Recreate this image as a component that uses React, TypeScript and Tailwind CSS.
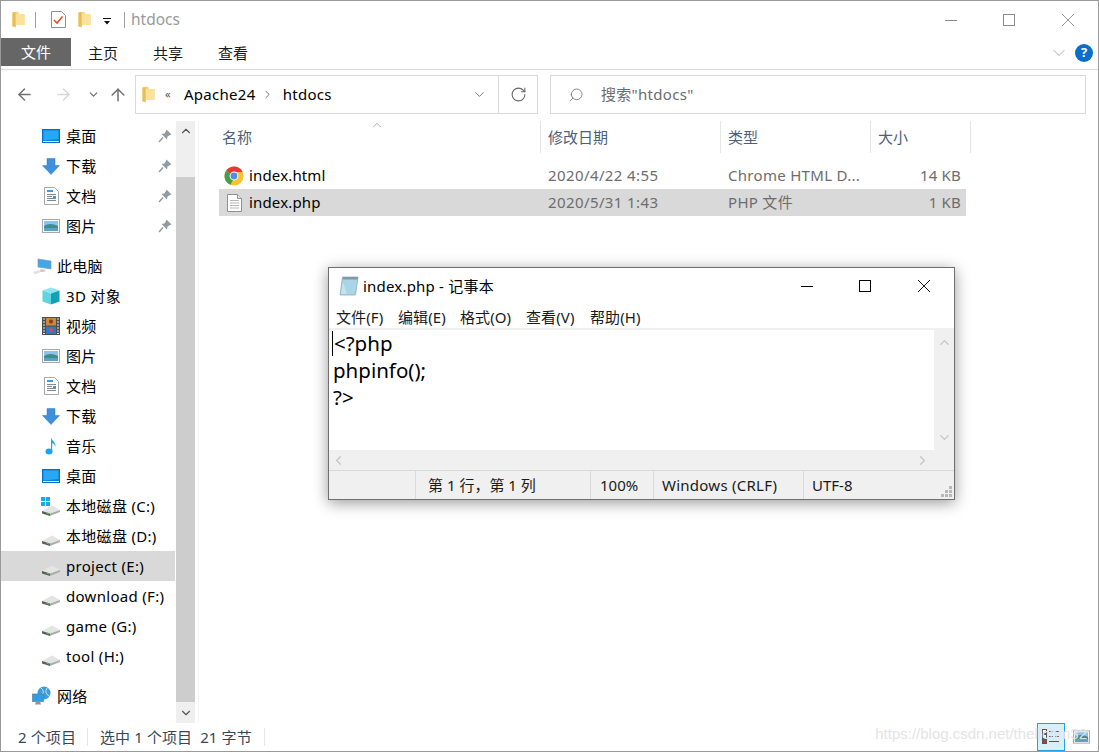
import { ChevronDown, ChevronUp, ChevronLeft, ChevronRight, ArrowLeft, ArrowRight, ArrowUp, RotateCw, Search } from 'lucide-react';
import type { ReactNode } from 'react';

function Folder({ className = '' }: { className?: string }) {
  return (
    <svg viewBox="0 0 13 17" className={`w-[13px] h-[17px] ${className}`}>
      <path d="M0.5 1.5 L6 0.5 L7 3 L12.5 3 L12.5 14 L4 14 L4 16.5 L0.5 15.5 Z" fill="#f6d67c" />
      <path d="M0.5 1.5 L3.5 1 L3.5 15.5 L0.5 15.5 Z" fill="#e8bd55" />
      <path d="M4 3 H12.5 V14 H4 Z" fill="#fbe29a" />
    </svg>
  );
}

function Desktop() {
  return (
    <svg viewBox="0 0 18 14" className="w-[18px] h-[14px]">
      <rect x="0.5" y="0.5" width="17" height="13" fill="#0f7fd6" stroke="#0a6fc2" />
      <path d="M1.5 1.5 H16.5 V10 L1.5 11.5 Z" fill="#28a8f4" />
      <rect x="1" y="12" width="16" height="1" fill="#d5ecfb" />
    </svg>
  );
}

function Download() {
  return (
    <svg viewBox="0 0 18 17" className="w-[18px] h-[17px]">
      <path d="M5 0.5 H13 V7.5 H17.5 L9 16.5 L0.5 7.5 H5 Z" fill="#3f8fdc" stroke="#2f7fcc" strokeWidth="0.5" />
    </svg>
  );
}

function Doc() {
  return (
    <svg viewBox="0 0 15 18" className="w-[15px] h-[18px]">
      <path d="M0.5 0.5 H10.5 L14.5 4.5 V17.5 H0.5 Z" fill="#fff" stroke="#a8a8a8" />
      <rect x="3" y="3" width="6" height="2" fill="#3b9be8" />
      <rect x="3" y="7" width="9" height="1" fill="#7c8a96" />
      <rect x="3" y="9" width="5" height="1" fill="#7c8a96" />
      <rect x="9" y="9" width="3" height="2" fill="#3b9be8" />
      <rect x="3" y="11" width="9" height="1" fill="#7c8a96" />
      <rect x="3" y="13" width="9" height="1" fill="#7c8a96" />
    </svg>
  );
}

function Picture({ className = 'w-[18px] h-[14px]' }: { className?: string }) {
  return (
    <svg viewBox="0 0 18 14" className={className}>
      <rect x="0.5" y="0.5" width="17" height="13" fill="#fff" stroke="#a8a8a8" />
      <rect x="2" y="2" width="14" height="5" fill="#8cc4ea" />
      <path d="M2 7 Q8 3 16 7 V12 H2 Z" fill="#3f8c8a" />
      <rect x="2" y="9" width="14" height="3" fill="#5aa2c8" />
    </svg>
  );
}

function Computer() {
  return (
    <svg viewBox="0 0 20 17" className="w-[20px] h-[17px]">
      <path d="M6 1 L19 3 V11 L6 9 Z" fill="#3fa9e8" stroke="#8a9aa8" strokeWidth="0.7" />
      <path d="M9 11 L14 12 L12 14 H7 Z" fill="#c8ccd0" />
      <path d="M1 14 L7 12 L9 14 L3 16.5 Z" fill="#dfe2e5" />
    </svg>
  );
}

function Cube() {
  return (
    <svg viewBox="0 0 18 18" className="w-[18px] h-[18px]">
      <path d="M9 0.5 L17.5 3.5 L9 6.5 L0.5 3.5 Z" fill="#8fe6ee" />
      <path d="M0.5 3.5 L9 6.5 V17.5 L0.5 14.5 Z" fill="#5fd3e0" />
      <path d="M17.5 3.5 L9 6.5 V17.5 L17.5 14.5 Z" fill="#12a0b4" />
    </svg>
  );
}

function Film() {
  return (
    <svg viewBox="0 0 18 18" className="w-[18px] h-[18px]">
      <rect width="18" height="18" fill="#4d4d4d" />
      <path d="M1 2 H3 M1 5 H3 M1 8 H3 M1 11 H3 M1 14 H3 M1 16.5 H3 M15 2 H17 M15 5 H17 M15 8 H17 M15 11 H17 M15 14 H17 M15 16.5 H17" stroke="#e8e8e8" strokeWidth="1.2" />
      <rect x="4" y="1" width="10" height="7.5" fill="#d0873a" />
      <rect x="4" y="9.5" width="10" height="7.5" fill="#2f78c8" />
      <circle cx="9" cy="4.5" r="2" fill="#7d3d2a" />
      <circle cx="9" cy="13" r="2" fill="#d8503a" />
    </svg>
  );
}

function Music() {
  return (
    <svg viewBox="0 0 12 18" className="w-[12px] h-[18px]">
      <ellipse cx="4" cy="14.5" rx="3.5" ry="3" fill="#18a5ee" />
      <path d="M6 14 V0.5 C7 4 11 5 10.5 10 C10 7.5 8.5 6.5 7.2 6 V14 Z" fill="#18a5ee" />
    </svg>
  );
}

function Drive({ win = false }: { win?: boolean }) {
  return (
    <span className="relative block w-[18px] h-[18px]">
      <svg viewBox="0 0 18 11" className="absolute left-0 top-[8px] w-[18px] h-[11px]">
        <path d="M0 6 L10 0.5 L18 5 L8 8.5 Z" fill="#e4e4e4" />
        <path d="M0 6 L8 8.5 V11 L0 8.5 Z" fill="#5c5c5c" />
        <path d="M8 8.5 L18 5 V7 L8 11 Z" fill="#adadad" />
        <path d="M4.5 7.6 L7.2 8.4 V9.6 L4.5 8.8 Z" fill="#3fd04a" />
      </svg>
      {win && (
        <svg viewBox="0 0 9 9" className="absolute left-[-1px] top-0 w-[9px] h-[9px]">
          <path d="M0 0 H4 V4 H0 Z M5 0 H9 V4 H5 Z M0 5 H4 V9 H0 Z M5 5 H9 V9 H5 Z" fill="#12aee8" />
        </svg>
      )}
    </span>
  );
}

function Network() {
  return (
    <svg viewBox="0 0 20 20" className="w-[20px] h-[20px]">
      <circle cx="12" cy="7" r="6.5" fill="#3f9bdc" />
      <path d="M9 2 Q13 5 10 9 M15 2 Q12 7 17 10" stroke="#bfe3f7" fill="none" />
      <rect x="0.5" y="8" width="11" height="7.5" fill="#2b9fe8" stroke="#5a7f9a" strokeWidth="0.7" />
      <path d="M4 15.5 H8 L9 18.5 H3 Z" fill="#8a96a0" />
    </svg>
  );
}

function Pin() {
  return (
    <svg viewBox="0 0 14 14" className="w-[14px] h-[14px]">
      <path d="M8.5 0.5 L13.5 5.5 L12 6 L9.5 7.5 L9 10.5 L3.5 5 L6.5 4.5 L8 2 Z" fill="#8f9aa3" />
      <path d="M5 8.5 L1 13" stroke="#8f9aa3" strokeWidth="1.4" />
    </svg>
  );
}

function Chrome() {
  return (
    <svg viewBox="0 0 20 20" className="w-[20px] h-[20px]">
      <circle cx="10" cy="10" r="9.5" fill="#fbc02d" />
      <path d="M10 0.5 A9.5 9.5 0 0 1 18.6 6 H10 A4.2 4.2 0 0 0 6.2 8.2 L2.6 4 A9.5 9.5 0 0 1 10 0.5 Z" fill="#e53935" />
      <path d="M2.6 4 L6.2 8.2 A4.2 4.2 0 0 0 9 14 L6.5 18.8 A9.5 9.5 0 0 1 2.6 4 Z" fill="#43a047" />
      <circle cx="10" cy="10" r="4.4" fill="#fff" />
      <circle cx="10" cy="10" r="3.4" fill="#4a8fe8" />
    </svg>
  );
}

function TextFile() {
  return (
    <svg viewBox="0 0 15 18" className="w-[15px] h-[18px]">
      <path d="M0.5 0.5 H10.5 L14.5 4.5 V17.5 H0.5 Z" fill="#fff" stroke="#8f8f8f" />
      <path d="M10.5 0.5 V4.5 H14.5" fill="#e8e8e8" stroke="#8f8f8f" />
      <path d="M3 6.5 H12 M3 9 H12 M3 11.5 H12 M3 14 H12" stroke="#b8b8b8" />
    </svg>
  );
}

function NotepadIcon() {
  return (
    <svg viewBox="0 0 20 20" className="w-[20px] h-[20px]">
      <path d="M3.5 1 H19 L16.5 19 H1 Z" fill="#a9d5e6" stroke="#7fa6b6" strokeWidth="0.7" />
      <path d="M4 1 H19 L18.6 3.5 H3.6 Z" fill="#8298a4" />
      <path d="M4 6 L2 18 H8 Z" fill="#c7e4ee" />
    </svg>
  );
}

// min / max / close, drawn crisp like the Windows caption glyphs
function WinControls({ color, className = '' }: { color: string; className?: string }) {
  return (
    <div className={`flex items-center ${className}`}>
      <svg viewBox="0 0 12 12" className="w-[12px] h-[12px]">
        <path d="M0 6.5 H12" stroke={color} />
      </svg>
      <svg viewBox="0 0 12 12" className="w-[12px] h-[12px] ml-[46px]">
        <rect x="0.5" y="0.5" width="11" height="11" fill="none" stroke={color} />
      </svg>
      <svg viewBox="0 0 12 12" className="w-[12px] h-[12px] ml-[47px]">
        <path d="M0 0 L12 12 M12 0 L0 12" stroke={color} strokeWidth="0.9" />
      </svg>
    </div>
  );
}

function NavRow({ icon, label, pin, indent = true, active }: { icon: ReactNode; label: string; pin?: boolean; indent?: boolean; active?: boolean }) {
  return (
    <div className={`h-[30px] flex items-center text-[15px] tracking-[0.3px] text-black ${active ? 'bg-[#d9d9d9] mr-px' : ''} ${indent ? 'pl-[40px]' : 'pl-[30px]'}`}>
      <span className={`flex justify-center items-center ${indent ? 'w-[20px] mr-[5px]' : 'w-[22px] mr-[4px]'}`}>{icon}</span>
      <span className="flex-1 whitespace-nowrap pt-px">{label}</span>
      {pin && <span className="mr-[4px]"><Pin /></span>}
    </div>
  );
}

function Sidebar() {
  return (
    <div className="w-[175px] shrink-0">
      <NavRow icon={<Desktop />} label="桌面" pin />
      <NavRow icon={<Download />} label="下载" pin />
      <NavRow icon={<Doc />} label="文档" pin />
      <NavRow icon={<Picture />} label="图片" pin />
      <div className="h-[10px]" />
      <NavRow icon={<Computer />} label="此电脑" indent={false} />
      <NavRow icon={<Cube />} label="3D 对象" />
      <NavRow icon={<Film />} label="视频" />
      <NavRow icon={<Picture />} label="图片" />
      <NavRow icon={<Doc />} label="文档" />
      <NavRow icon={<Download />} label="下载" />
      <NavRow icon={<Music />} label="音乐" />
      <NavRow icon={<Desktop />} label="桌面" />
      <NavRow icon={<Drive win />} label="本地磁盘 (C:)" />
      <NavRow icon={<Drive />} label="本地磁盘 (D:)" />
      <NavRow icon={<Drive />} label="project (E:)" active />
      <NavRow icon={<Drive />} label="download (F:)" />
      <NavRow icon={<Drive />} label="game (G:)" />
      <NavRow icon={<Drive />} label="tool (H:)" />
      <div className="h-[10px]" />
      <NavRow icon={<Network />} label="网络" indent={false} />
    </div>
  );
}

function FileRow({ icon, name, date, type, size, selected }: { icon: ReactNode; name: string; date: string; type: string; size: string; selected?: boolean }) {
  return (
    <div className={`grid grid-cols-[329px_180px_150px_83px] items-center w-[747px] h-[27px] text-[15px] text-[#6d6d6d] ${selected ? 'bg-[#d9d9d9]' : ''}`}>
      <div className="flex items-center pl-[5px] text-black">
        <span className="w-[20px] flex justify-center mr-[5px]">{icon}</span>
        <span className="tracking-[0.15px]">{name}</span>
      </div>
      <div className="tracking-[0.4px]">{date}</div>
      <div className="whitespace-nowrap tracking-[0.3px]">{type}</div>
      <div className="text-right tracking-[0.2px]">{size}</div>
    </div>
  );
}

function Notepad() {
  return (
    <div className="absolute left-[327px] top-[266px] w-[627px] h-[233px] bg-white border border-[#6f6f6f] shadow-[0_3px_14px_rgba(0,0,0,0.4)] flex flex-col text-black">
      <div className="h-[36px] flex items-center pl-[10px] shrink-0">
        <NotepadIcon />
        <span className="ml-[4px] text-[15px] tracking-[0.2px] flex-1">index.php - 记事本</span>
        <WinControls color="#000" className="mr-[24px]" />
      </div>
      <div className="h-[24px] flex items-center pl-[7px] pt-[2px] text-[15px] tracking-[0.1px] shrink-0 text-[#1a1a1a]">
        <span className="w-[62px]">文件(F)</span>
        <span className="w-[62px]">编辑(E)</span>
        <span className="w-[66px]">格式(O)</span>
        <span className="w-[64px]">查看(V)</span>
        <span>帮助(H)</span>
      </div>
      <div className="h-[2px] bg-[#f0f0f0] shrink-0" />
      <div className="h-[120px] flex shrink-0">
        <div className="flex-1 relative pl-[4px] text-[20.5px] leading-[27px]">
          <span className="absolute left-[3px] top-[1px] w-px h-[25px] bg-black" />
          <div className="pl-[1px]">&lt;?php</div>
          <div>phpinfo();</div>
          <div>?&gt;</div>
        </div>
        <div className="w-[20px] bg-[#f0f0f0] flex flex-col justify-between items-center text-[#c4c4c4] py-[5px]">
          <ChevronUp size={15} strokeWidth={2} />
          <ChevronDown size={15} strokeWidth={2} />
        </div>
      </div>
      <div className="h-[20px] bg-[#f0f0f0] flex items-center justify-between text-[#c4c4c4] pl-[2px] pr-[24px] shrink-0">
        <ChevronLeft size={15} strokeWidth={2} />
        <ChevronRight size={15} strokeWidth={2} />
      </div>
      <div className="flex-1 bg-[#f0f0f0] border-t border-[#d9d9d9] flex items-center text-[15px] text-[#1a1a1a]">
        <div className="w-[86px] h-full" />
        <div className="w-[175px] h-full flex items-center border-l border-[#d9d9d9] pl-[12px]">第 1 行，第 1 列</div>
        <div className="w-[63px] h-full flex items-center border-l border-[#d9d9d9] pl-[9px]">100%</div>
        <div className="w-[150px] h-full flex items-center border-l border-[#d9d9d9] pl-[8px] tracking-[0.25px]">Windows (CRLF)</div>
        <div className="flex-1 h-full flex items-center border-l border-[#d9d9d9] pl-[8px] relative">
          UTF-8
          <svg viewBox="0 0 12 12" className="absolute right-[1px] bottom-[1px] w-[12px] h-[12px]">
            <path d="M8 0 H11 V3 H8 Z M4 4 H7 V7 H4 Z M8 4 H11 V7 H8 Z M0 8 H3 V11 H0 Z M4 8 H7 V11 H4 Z M8 8 H11 V11 H8 Z" fill="#b8b8b8" />
          </svg>
        </div>
      </div>
    </div>
  );
}

export default function App() {
  return (
    <div className="relative w-[1099px] h-[752px] overflow-hidden bg-white border border-[#9a9a9a] box-border flex flex-col [font-family:'Noto_Sans','Noto_Sans_CJK_SC',sans-serif]">
      {/* title bar */}
      <div className="h-[37px] flex items-center shrink-0 pl-[11px]">
        <Folder />
        <span className="w-px h-[16px] bg-[#a0a0a0] ml-[10px]" />
        <svg viewBox="0 0 15 17" className="w-[15px] h-[17px] ml-[15px]">
          <path d="M0.5 0.5 H10.5 L14.5 4.5 V16.5 H0.5 Z" fill="#fff" stroke="#8f8f8f" />
          <path d="M3 9 L6 12 L11.5 5.5" fill="none" stroke="#e8501f" strokeWidth="1.6" />
        </svg>
        <Folder className="ml-[12px]" />
        <svg viewBox="0 0 8 7" className="w-[8px] h-[7px] ml-[12px] mt-[3px]">
          <path d="M0 0 H8 V1 H0 Z M1 3 H7 L4 6.5 Z" fill="#111" />
        </svg>
        <span className="w-px h-[16px] bg-[#a0a0a0] ml-[13px]" />
        <span className="ml-[6px] text-[15.5px] text-[#9a9a9a] flex-1">htdocs</span>
        <WinControls color="#8a8a8a" className="mr-[24px]" />
      </div>

      {/* ribbon tabs */}
      <div className="h-[32px] flex shrink-0 border-b border-[#dadada] text-[15px] text-[#1a1a1a] items-start">
        <div className="w-[70px] h-[28px] bg-[#666666] text-white flex items-center justify-center">文件</div>
        <div className="w-[82px] h-[30px] flex items-center pl-[17px]">主页</div>
        <div className="w-[65px] h-[30px] flex items-center">共享</div>
        <div className="h-[30px] flex items-center flex-1">查看</div>
        <ChevronDown size={20} strokeWidth={1} className="text-[#9a9a9a] mt-[5px] mr-[6px]" />
        <div className="w-[18px] h-[18px] mt-[6px] mr-[5px] rounded-full bg-[#0a6fc9] text-white text-[13px] font-bold flex items-center justify-center">?</div>
      </div>

      {/* address bar */}
      <div className="h-[51px] pt-[5px] flex shrink-0 items-start">
        <div className="w-[134px] h-[39px] flex items-center pl-[14px]">
          <ArrowLeft size={19} strokeWidth={1.8} className="text-[#6f6f6f]" />
          <ArrowRight size={19} strokeWidth={1.8} className="text-[#d6d6d6] ml-[20px]" />
          <ChevronDown size={13} strokeWidth={2.2} className="text-[#6f6f6f] ml-[14px]" />
          <ArrowUp size={20} strokeWidth={1.8} className="text-[#6f6f6f] ml-[8px]" />
        </div>
        <div className="w-[403px] h-[39px] border border-[#d9d9d9] flex items-center text-[15px] tracking-[0.3px] text-black">
          <span className="ml-[6px]"><Folder /></span>
          <span className="ml-[10px] text-[11px] text-[#555555]">«</span>
          <span className="ml-[13px]">Apache24</span>
          <ChevronRight size={13} strokeWidth={1.8} className="text-[#777777] ml-[5px] mr-[9px]" />
          <span className="flex-1">htdocs</span>
          <ChevronDown size={15} strokeWidth={1.4} className="text-[#666666] mr-[11px]" />
          <div className="w-[39px] h-full border-l border-[#d9d9d9] flex items-center justify-center">
            <RotateCw size={17} strokeWidth={1.5} className="text-[#666666]" />
          </div>
        </div>
        <div className="ml-[12px] w-[536px] h-[39px] border border-[#d9d9d9] flex items-center pl-[17px] text-[15px] tracking-[0.3px] text-[#6d6d6d]">
          <Search size={16} strokeWidth={1.2} className="text-[#6d6d6d] -scale-x-100" />
          <span className="ml-[17px]">搜索"htdocs"</span>
        </div>
      </div>

      {/* body */}
      <div className="flex-1 flex min-h-0">
        <Sidebar />
        <div className="w-[19px] shrink-0 flex flex-col text-[#555555]">
          <div className="h-[56px] bg-[#efefef] flex justify-center pt-[3px]"><ChevronUp size={14} strokeWidth={2} /></div>
          <div className="flex-1 bg-[#cdcdcd]" />
          <div className="h-[21px] bg-[#efefef] flex justify-center items-center"><ChevronDown size={14} strokeWidth={2} /></div>
        </div>
        <div className="flex-1 ml-[3px] border-l border-[#f3f3f3] pl-[20px] relative">
          <ChevronUp size={14} strokeWidth={1} className="absolute left-[171px] -top-[3px] text-[#777777]" />
          <div className="flex h-[32px] text-[15px] text-[#4c607a]">
            <div className="w-[322px] pl-[3px] pt-px flex items-center border-r border-[#e5e5e5]">名称</div>
            <div className="w-[180px] pl-[7px] pt-px flex items-center border-r border-[#e5e5e5]">修改日期</div>
            <div className="w-[150px] pl-[7px] pt-px flex items-center border-r border-[#e5e5e5]">类型</div>
            <div className="w-[100px] pl-[7px] pt-px flex items-center border-r border-[#e5e5e5]">大小</div>
          </div>
          <div className="h-[9px]" />
          <FileRow icon={<Chrome />} name="index.html" date="2020/4/22 4:55" type="Chrome HTML D..." size="14 KB" />
          <FileRow icon={<TextFile />} name="index.php" date="2020/5/31 1:43" type="PHP 文件" size="1 KB" selected />
        </div>
      </div>

      {/* status bar */}
      <div className="h-[28px] flex items-center shrink-0 text-[15px] tracking-[0.1px] text-[#33475b]">
        <span className="w-[87px] pl-[17px] border-r border-[#e5e5e5] h-[18px] leading-[18px]">2 个项目</span>
        <span className="w-[177px] pl-[12px] border-r border-[#e5e5e5] h-[18px] leading-[18px] whitespace-pre">选中 1 个项目  21 字节</span>
        <div className="flex-1" />
        <div className="w-[28px] h-[28px] bg-[#d8eef9] border border-[#26a0da] flex items-center justify-center">
          <svg viewBox="0 0 18 16" className="w-[18px] h-[16px]">
            <rect x="0.5" y="0.5" width="4" height="4" fill="#fff" stroke="#555" />
            <rect x="0.5" y="5.5" width="4" height="4" fill="#fff" stroke="#555" />
            <rect x="0.5" y="10.5" width="4" height="4" fill="#c0392b" stroke="#555" />
            <path d="M7 2.5 H11 M13 2.5 H17 M7 7.5 H11 M13 7.5 H17 M7 12.5 H17" stroke="#555" />
          </svg>
        </div>
        <div className="w-[33px] flex justify-center"><Picture className="w-[17px] h-[14px]" /></div>
      </div>

      <Notepad />
      <span className="absolute right-[11px] bottom-[6px] text-[15px] text-[#e4e4e4] whitespace-nowrap [font-family:'Liberation_Sans',sans-serif]">https://blog.csdn.net/thelfchm32</span>
    </div>
  );
}
